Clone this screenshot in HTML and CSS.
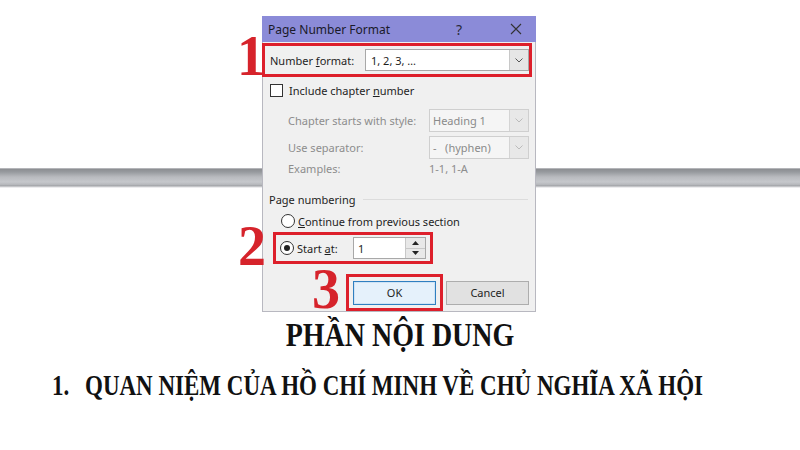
FILE: index.html
```html
<!DOCTYPE html>
<html>
<head>
<meta charset="utf-8">
<link rel="stylesheet" href="styles.css">
</head>
<body>
<div class="stage">
  <div class="dialog">
    <div class="titlebar">
      <span class="title">Page Number Format</span>
      <span class="help">?</span>
      <span class="close"><svg width="12" height="12" viewBox="0 0 12 12"><path d="M1 1L11 11M11 1L1 11" stroke="#333" stroke-width="1.1" fill="none"/></svg></span>
    </div>
    <div class="content">
      <div class="hl hl1">
        <span class="big n1">1</span>
        <span class="lbl">Number <u>f</u>ormat:</span>
        <div class="combo combo-main"><span class="val">1, 2, 3, …</span><span class="arrow"><svg width="8" height="5" viewBox="0 0 8 5"><path d="M0.5 0.5L4 4L7.5 0.5" stroke="#555" fill="none"/></svg></span></div>
      </div>
      <div class="row chk-row">
        <span class="checkbox"></span>
        <span class="lbl">Include chapter <u>n</u>umber</span>
      </div>
      <div class="row dis-row first">
        <span class="lbl dis">Chapter starts with style:</span>
        <div class="combo combo-dis"><span class="val">Heading 1</span><span class="arrow"><svg width="8" height="5" viewBox="0 0 8 5"><path d="M0.5 0.5L4 4L7.5 0.5" stroke="#bbb" fill="none"/></svg></span></div>
      </div>
      <div class="row dis-row">
        <span class="lbl dis">Use separator:</span>
        <div class="combo combo-dis"><span class="val">-&nbsp;&nbsp; (hyphen)</span><span class="arrow"><svg width="8" height="5" viewBox="0 0 8 5"><path d="M0.5 0.5L4 4L7.5 0.5" stroke="#bbb" fill="none"/></svg></span></div>
      </div>
      <div class="row ex-row">
        <span class="lbl dis">Examples:</span>
        <span class="lbl dis ex-val">1-1, 1-A</span>
      </div>
      <div class="group-head">
        <span class="lbl">Page numbering</span>
        <span class="rule"></span>
      </div>
      <div class="row radio-row">
        <span class="radio"></span>
        <span class="lbl"><u>C</u>ontinue from previous section</span>
      </div>
      <div class="hl hl2">
        <span class="big n2">2</span>
        <span class="radio checked"></span>
        <span class="lbl start-lbl">Start <u>a</u>t:</span>
        <div class="spin">
          <span class="val">1</span>
          <span class="spin-btns">
            <span class="sb"><svg width="7" height="4" viewBox="0 0 7 4"><path d="M0 4L3.5 0L7 4Z" fill="#222"/></svg></span>
            <span class="sb"><svg width="7" height="4" viewBox="0 0 7 4"><path d="M0 0L3.5 4L7 0Z" fill="#222"/></svg></span>
          </span>
        </div>
      </div>
      <div class="buttons">
        <div class="hl hl3">
          <span class="big n3">3</span>
          <button class="btn btn-ok">OK</button>
        </div>
        <button class="btn">Cancel</button>
      </div>
    </div>
  </div>
</div>
<h1 class="h-main">PHẦN NỘI DUNG</h1>
<h2 class="h-sub"><span class="num">1.</span>QUAN NIỆM CỦA HỒ CHÍ MINH VỀ CHỦ NGHĨA XÃ HỘI</h2>
</body>
</html>
```
FILE: styles.css
```css
html, body {
  margin: 0;
  padding: 0;
  background: #ffffff;
}
body {
  width: 800px;
  height: 450px;
  overflow: hidden;
}
.stage {
  height: 312px;
  padding-top: 16px;
  box-sizing: border-box;
  background-image: linear-gradient(to bottom, #dcdce0 0px, #8c8e92 1px, #979a9e 4px, #b9bbbf 9px, #c6c8cc 14px, #b3b5b9 17px, #9c9ea2 18px, #ececee 19px);
  background-repeat: no-repeat;
  background-size: 100% 20px;
  background-position: 0 168px;
}
.dialog {
  margin-left: 262px;
  width: 274px;
  height: 296px;
  box-sizing: border-box;
  background: #f0f0f0;
  border: 1px solid #b8b8c0;
  border-top: none;
  position: relative;
  font-family: "Noto Sans", "Open Sans", sans-serif;
  font-size: 11px;
  color: #1e1e1e;
}
.titlebar {
  height: 26px;
  margin: 0 -1px;
  background: #8b8bd8;
  display: flex;
  align-items: center;
  padding-left: 6px;
}
.title {
  font-size: 12px;
  color: #1a1a2a;
  flex: 1;
}
.help {
  font-size: 14px;
  color: #2a2a3a;
  width: 20px;
  margin-right: 34px;
}
.close {
  width: 12px;
  height: 12px;
  margin-right: 14px;
  display: flex;
}
.content {
  padding-top: 1px;
}
.lbl u { text-decoration: underline; text-underline-offset: 1px; }
.hl {
  border: 3px solid #dd1f2b;
  position: relative;
  box-sizing: border-box;
  display: flex;
  align-items: center;
}
.big {
  position: absolute;
  font-family: "Liberation Serif", serif;
  font-weight: bold;
  font-size: 56px;
  line-height: 1;
  color: #d6232b;
}
.n1 { left: -28px; top: -18px; }
.n2 { left: -38px; top: -17px; }
.n3 { left: -37px; top: -16px; }
.hl1 {
  margin-left: -1px;
  width: 270px;
  height: 34px;
  padding-left: 5px;
}
.hl1 .lbl { width: 95px; }
.combo {
  display: flex;
  align-items: stretch;
  box-sizing: border-box;
}
.combo .val { flex: 1; padding-left: 5px; display: flex; align-items: center; }
.combo .arrow { width: 18px; display: flex; align-items: center; justify-content: center; }
.combo-main {
  width: 164px;
  height: 22px;
  background: #fff;
  border: 1px solid #a8a8a8;
}
.combo-main .arrow { background: #e6e6e6; border-left: 1px solid #c8c8c8; }
.combo-dis {
  width: 100px;
  height: 23px;
  background: #f5f5f5;
  border: 1px solid #cfcfcf;
  color: #8a8a8a;
}
.combo-dis .val { padding-left: 3px; }
.combo-dis .arrow { background: #e8e8e8; border-left: 1px solid #d4d4d4; }
.row {
  display: flex;
  align-items: center;
}
.chk-row {
  height: 24px;
  margin-top: 1px;
  padding-left: 7px;
}
.checkbox {
  width: 13px;
  height: 13px;
  box-sizing: border-box;
  border: 1px solid #333;
  background: #fff;
  margin-right: 6px;
}
.dis { color: #8d8d8d; }
.dis-row {
  padding-left: 25px;
  height: 27px;
}
.dis-row.first { margin-top: 5px; }
.dis-row .lbl { width: 141px; }
.ex-row {
  padding-left: 25px;
  height: 18px;
  margin-top: -2px;
}
.ex-row .lbl:first-child { width: 141px; }
.group-head {
  display: flex;
  align-items: center;
  padding-left: 6px;
  padding-right: 7px;
  height: 20px;
  margin-top: 12px;
}
.group-head .rule {
  flex: 1;
  height: 1px;
  background: #dcdcdc;
  margin-left: 8px;
}
.radio-row {
  height: 22px;
  padding-left: 18px;
  margin-top: 1px;
}
.radio {
  width: 14px;
  height: 14px;
  box-sizing: border-box;
  border: 1px solid #333;
  border-radius: 50%;
  background: #fff;
  margin-right: 3px;
  position: relative;
}
.radio.checked::after {
  content: "";
  position: absolute;
  left: 3px;
  top: 3px;
  width: 6px;
  height: 6px;
  border-radius: 50%;
  background: #222;
}
.hl2 {
  margin-left: 10px;
  width: 160px;
  height: 32px;
  padding-left: 4px;
}
.start-lbl { width: 56px; }
.spin {
  width: 73px;
  height: 22px;
  box-sizing: border-box;
  border: 1px solid #a8a8a8;
  background: #fff;
  display: flex;
}
.spin .val { flex: 1; padding-left: 4px; display: flex; align-items: center; }
.spin-btns {
  width: 19px;
  display: flex;
  flex-direction: column;
  border-left: 1px solid #c8c8c8;
}
.sb {
  flex: 1;
  background: #e8e8e8;
  display: flex;
  align-items: center;
  justify-content: center;
}
.sb + .sb { border-top: 1px solid #c8c8c8; }
.buttons {
  display: flex;
  align-items: center;
  margin-top: 10px;
  padding-left: 83px;
}
.hl3 {
  width: 97px;
  height: 37px;
  padding-left: 4px;
}
.btn {
  width: 83px;
  height: 24px;
  font-family: "Noto Sans", "Open Sans", sans-serif;
  font-size: 11px;
  color: #1e1e1e;
  background: #e1e1e1;
  border: 1px solid #adadad;
  padding: 0;
}
.btn-ok {
  background: #e5f1fb;
  border: 1px solid #2f7fc0;
  box-shadow: inset 0 0 0 1px #cfe3f5;
}
.buttons > .btn { margin-left: 3px; }
.h-main {
  margin: 0;
  padding-top: 5px;
  text-align: center;
  font-family: "Liberation Serif", serif;
  font-weight: bold;
  font-size: 28px;
  line-height: 32px;
  color: #111;
  transform: scaleY(1.2);
  transform-origin: 50% 10px;
}
.h-sub {
  margin: 0;
  padding-top: 22px;
  padding-left: 52px;
  font-family: "Liberation Serif", serif;
  font-weight: bold;
  font-size: 23px;
  line-height: 26px;
  color: #111;
  transform: scaleY(1.28);
  transform-origin: 0 27px;
}
.h-sub .num {
  display: inline-block;
  width: 33px;
}
```
